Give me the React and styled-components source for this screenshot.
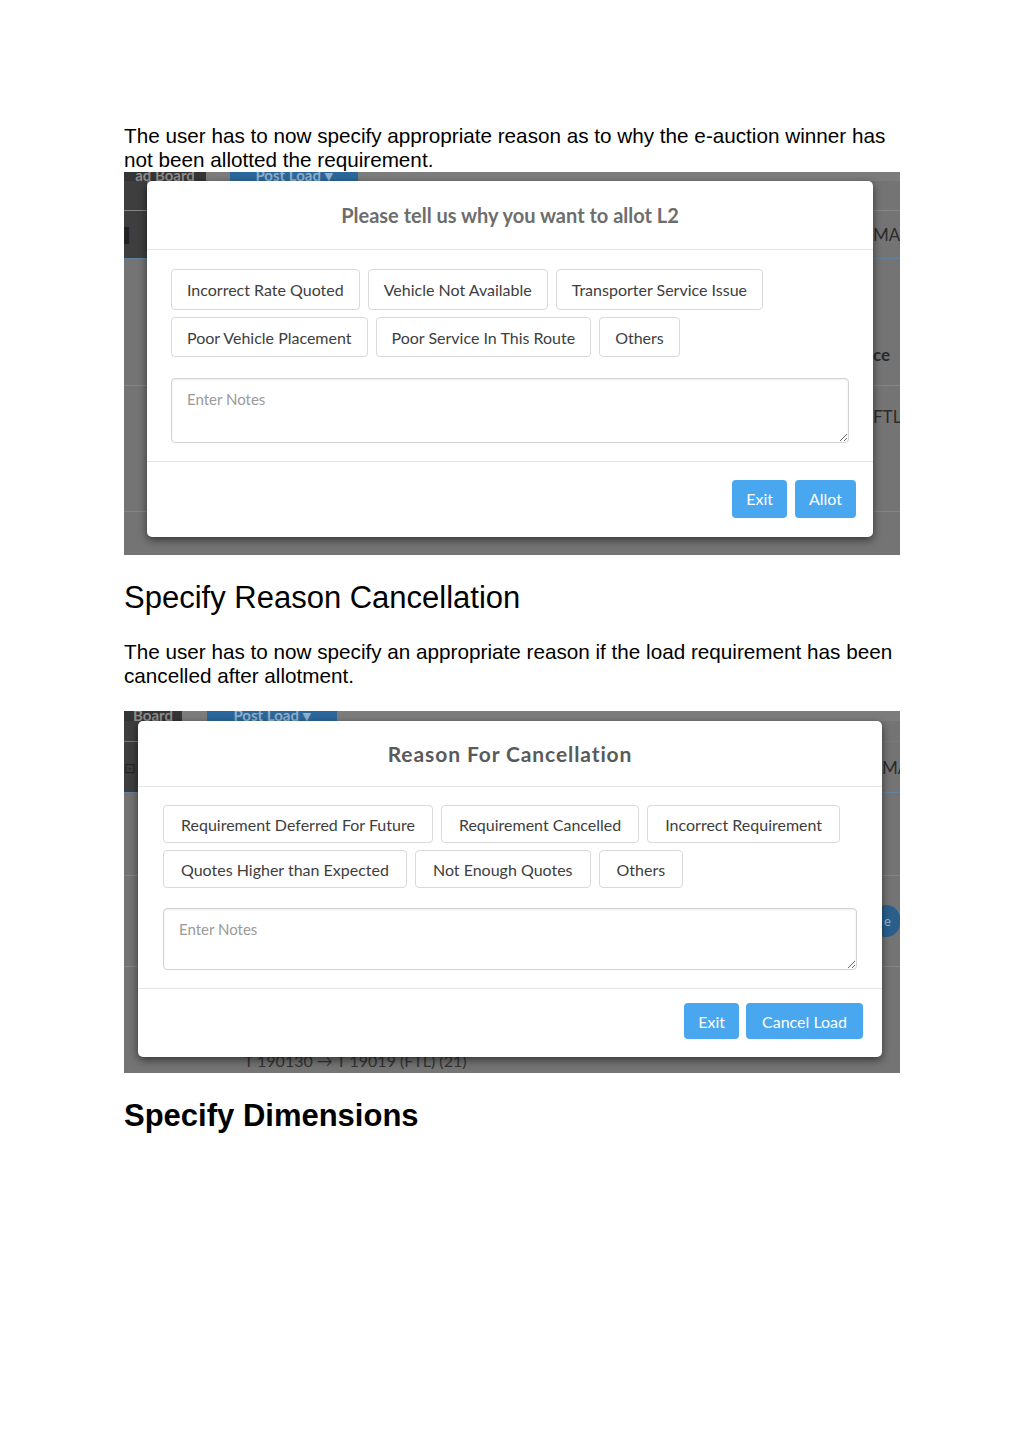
import React from "react";
import styled, { createGlobalStyle } from "styled-components";

const GlobalStyle = createGlobalStyle`
  body {
    margin: 0;
    background: #ffffff;
    font-family: "Liberation Sans", Arial, sans-serif;
  }
`;

const Page = styled.div`
  width: 776px;
  padding: 124px 0 200px 124px;
  color: #000;
`;

const Para = styled.p`
  margin: 0;
  font-size: 20.7px;
  line-height: 24px;
`;

const Heading = styled.h2`
  margin: 25px 0 ${(p) => p.$mb || 24}px;
  font-size: 31px;
  line-height: 36px;
  font-weight: ${(p) => (p.$bold ? 700 : 400)};
`;

const Shot = styled.div`
  position: relative;
  height: ${(p) => p.$h}px;
  margin-top: ${(p) => p.$mt || 0}px;
  background: #747474;
  overflow: hidden;
  font-family: Lato, "Open Sans", sans-serif;
`;

const NavStrip = styled.div`
  display: flex;
  height: ${(p) => p.$h}px;
  background: #7c7c7c;
  overflow: hidden;
`;

const NavItem = styled.div`
  display: flex;
  align-items: flex-end;
  justify-content: center;
  overflow: hidden;
  width: ${(p) => p.$w}px;
  margin-left: ${(p) => p.$ml || 0}px;
  background: ${(p) => p.$bg};
  color: ${(p) => p.$fg};
  font-size: 15px;
  font-weight: 700;
  line-height: 12px;
  white-space: nowrap;
`;

const BgRow = styled.div`
  display: flex;
  height: ${(p) => p.$h}px;
  border-bottom: 1px solid ${(p) => p.$line || "#858585"};
`;

const BgLeft = styled.div`
  width: 23px;
  background: ${(p) => p.$bg || "transparent"};
  color: #222;
  font-size: 14px;
  display: flex;
  align-items: center;
`;

const BgRight = styled.div`
  margin-left: auto;
  width: ${(p) => p.$w || 27}px;
  display: flex;
  align-items: ${(p) => p.$align || "center"};
  padding-bottom: ${(p) => p.$pb || 0}px;
  padding-top: ${(p) => p.$pt || 0}px;
  color: #2b2b2b;
  font-size: 17px;
  font-weight: ${(p) => (p.$bold ? 700 : 400)};
  white-space: nowrap;
  overflow: hidden;
`;

const BgPill = styled.div`
  width: 40px;
  height: 32px;
  border-radius: 16px;
  margin-left: -10px;
  background: #2a5f8c;
  color: #9bb6cc;
  font-size: 13px;
  display: flex;
  align-items: center;
  padding-left: 12px;
`;

const BgFoot = styled.div`
  padding-left: 120px;
  margin-top: 84px;
  color: #333;
  font-size: 16px;
  white-space: nowrap;
`;

const Modal = styled.div`
  position: absolute;
  top: ${(p) => p.$top}px;
  left: ${(p) => p.$left}px;
  width: ${(p) => p.$w}px;
  height: ${(p) => p.$h}px;
  display: flex;
  flex-direction: column;
  background: #fff;
  border-radius: 5px;
  box-shadow: 0 3px 8px rgba(0, 0, 0, 0.55);
`;

const ModalHeader = styled.div`
  height: ${(p) => p.$h}px;
  flex-shrink: 0;
  display: flex;
  align-items: center;
  justify-content: center;
  border-bottom: 1px solid #e6e6e6;
  color: ${(p) => p.$color};
  font-size: ${(p) => p.$size}px;
  font-weight: 700;
  letter-spacing: ${(p) => p.$ls || 0}px;
`;

const ModalBody = styled.div`
  padding: ${(p) => p.$pt}px ${(p) => p.$px}px 18px;
  border-bottom: 1px solid #e6e6e6;
`;

const ChipRow = styled.div`
  display: flex;
  gap: 8px;
  & + & {
    margin-top: 7px;
  }
`;

const Chip = styled.button`
  height: ${(p) => p.$h}px;
  padding: 0 ${(p) => p.$px || 15}px;
  background: #fff;
  border: 1px solid #d9d9d9;
  border-radius: 4px;
  color: #3e3e3e;
  font-family: Lato, "Open Sans", sans-serif;
  font-size: 16px;
  white-space: nowrap;
`;

const Notes = styled.textarea`
  display: block;
  box-sizing: border-box;
  width: 100%;
  height: ${(p) => p.$h}px;
  margin-top: ${(p) => p.$mt}px;
  padding: 11px 15px;
  border: 1px solid #d3d3d3;
  border-radius: 4px;
  box-shadow: inset 0 1px 2px rgba(0, 0, 0, 0.08);
  font-family: Lato, "Open Sans", sans-serif;
  font-size: 15px;
  resize: vertical;
  &::placeholder {
    color: #9a9a9a;
  }
`;

const ModalFooter = styled.div`
  flex: 1;
  display: flex;
  align-items: center;
  justify-content: flex-end;
  gap: ${(p) => p.$gap || 8}px;
  padding: 0 ${(p) => p.$pr}px ${(p) => p.$pb || 0}px 0;
`;

const PrimaryButton = styled.button`
  height: ${(p) => p.$h}px;
  padding: 0 ${(p) => p.$px || 14}px;
  border: none;
  border-radius: 4px;
  background: #48a7ef;
  color: #fff;
  font-family: Lato, "Open Sans", sans-serif;
  font-size: 16px;
`;

const allotReasons = [
  ["Incorrect Rate Quoted", "Vehicle Not Available", "Transporter Service Issue"],
  ["Poor Vehicle Placement", "Poor Service In This Route", "Others"],
];

const cancelReasons = [
  ["Requirement Deferred For Future", "Requirement Cancelled", "Incorrect Requirement"],
  ["Quotes Higher than Expected", "Not Enough Quotes", "Others"],
];

const AllotShot = () => (
  <Shot $h={383}>
    <NavStrip $h={9}>
      <NavItem $w={82} $bg="#353535" $fg="#8d8d8d">ad Board</NavItem>
      <NavItem $w={128} $ml={24} $bg="#2c679c" $fg="#8fb0cc">Post Load ▾</NavItem>
    </NavStrip>
    <BgRow $h={29}>
      <BgLeft $bg="#3e3e3e" />
    </BgRow>
    <BgRow $h={47} $line="#63819e">
      <BgLeft $bg="#3e3e3e">▌</BgLeft>
      <BgRight>MAR</BgRight>
    </BgRow>
    <BgRow $h={126}>
      <BgLeft />
      <BgRight $bold $align="flex-end" $pb={20}>ce</BgRight>
    </BgRow>
    <BgRow $h={125}>
      <BgLeft />
      <BgRight $align="flex-start" $pt={20}>FTL</BgRight>
    </BgRow>
    <Modal $top={9} $left={23} $w={726} $h={356}>
      <ModalHeader $h={68} $size={20} $color="#6d6d6d">
        Please tell us why you want to allot L2
      </ModalHeader>
      <ModalBody $pt={19} $px={24}>
        {allotReasons.map((row, i) => (
          <ChipRow key={i}>
            {row.map((r) => (
              <Chip key={r} $h={i === 0 ? 41 : 40}>{r}</Chip>
            ))}
          </ChipRow>
        ))}
        <Notes $h={65} $mt={21} placeholder="Enter Notes" />
      </ModalBody>
      <ModalFooter $pr={17} $pb={2}>
        <PrimaryButton $h={38} $px={14}>Exit</PrimaryButton>
        <PrimaryButton $h={38} $px={14}>Allot</PrimaryButton>
      </ModalFooter>
    </Modal>
  </Shot>
);

const CancelShot = () => (
  <Shot $h={362} $mt={23}>
    <NavStrip $h={10}>
      <NavItem $w={58} $bg="#353535" $fg="#8d8d8d">Board</NavItem>
      <NavItem $w={130} $ml={25} $bg="#2c679c" $fg="#8fb0cc">Post Load ▾</NavItem>
    </NavStrip>
    <BgRow $h={20} $line="#7a7a7a">
      <BgLeft $bg="#3e3e3e" />
    </BgRow>
    <BgRow $h={50} $line="#63819e">
      <BgLeft $bg="#3e3e3e">⊡</BgLeft>
      <BgRight $w={18}>MA</BgRight>
    </BgRow>
    <BgRow $h={82}>
      <BgLeft />
    </BgRow>
    <BgRow $h={90}>
      <BgLeft />
      <BgRight $w={18}>
        <BgPill>e</BgPill>
      </BgRight>
    </BgRow>
    <BgFoot>T 190130 → T 19019 (FTL) (21)</BgFoot>
    <Modal $top={10} $left={14} $w={744} $h={336}>
      <ModalHeader $h={65} $size={21} $ls={0.9} $color="#5a5a5a">
        Reason For Cancellation
      </ModalHeader>
      <ModalBody $pt={18} $px={25}>
        {cancelReasons.map((row, i) => (
          <ChipRow key={i}>
            {row.map((r) => (
              <Chip key={r} $h={38} $px={17}>{r}</Chip>
            ))}
          </ChipRow>
        ))}
        <Notes $h={62} $mt={20} placeholder="Enter Notes" />
      </ModalBody>
      <ModalFooter $pr={19} $gap={7} $pb={4}>
        <PrimaryButton $h={36} $px={14}>Exit</PrimaryButton>
        <PrimaryButton $h={36} $px={16}>Cancel Load</PrimaryButton>
      </ModalFooter>
    </Modal>
  </Shot>
);

const App = () => {
  return (
    <>
      <GlobalStyle />
      <Page>
        <Para>
          The user has to now specify appropriate reason as to why the e-auction winner has
          not been allotted the requirement.
        </Para>
        <AllotShot />
        <Heading>Specify Reason Cancellation</Heading>
        <Para>
          The user has to now specify an appropriate reason if the load requirement has been
          cancelled after allotment.
        </Para>
        <CancelShot />
        <Heading $bold>Specify Dimensions</Heading>
      </Page>
    </>
  );
};

export default App;
